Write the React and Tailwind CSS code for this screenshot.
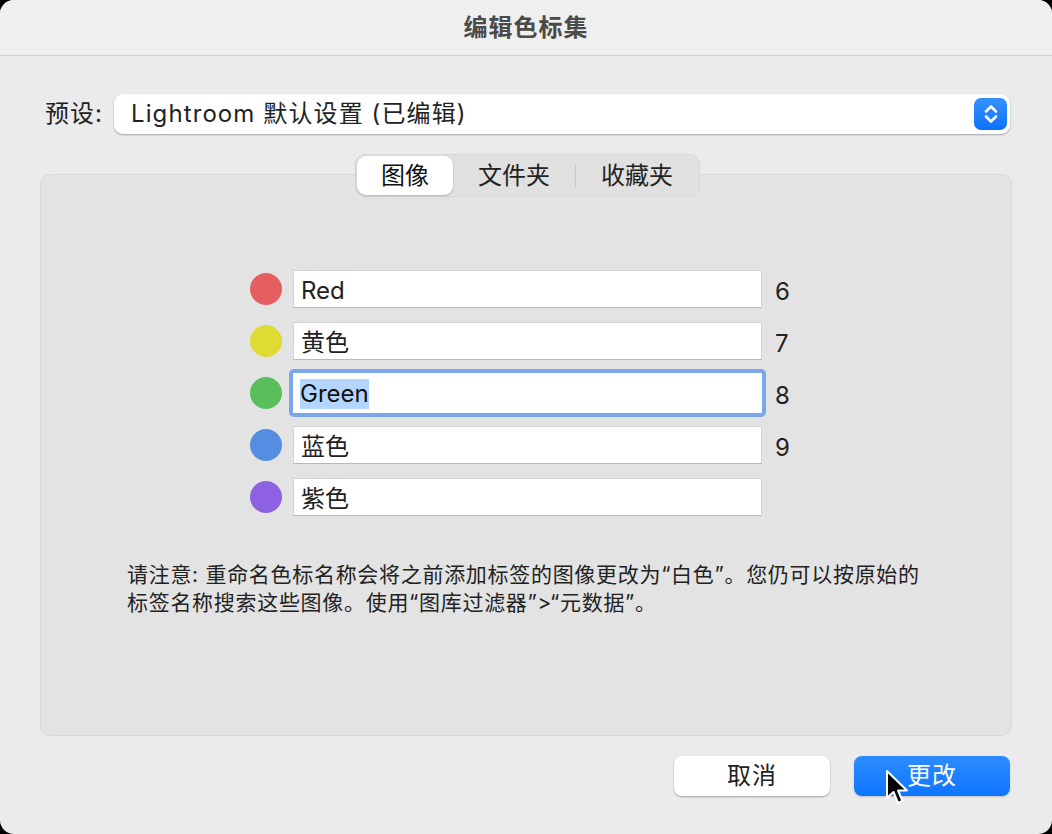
import React from 'react';

const font = { fontFamily: 'Inter, "Noto Sans CJK SC", sans-serif' };

const labels = [
    { color: 'bg-[#e65f5f]', name: 'Red', key: '6' },
    { color: 'bg-[#dfdb34]', name: '黄色', key: '7' },
    { color: 'bg-[#58bf5b]', name: 'Green', key: '8', focused: true },
    { color: 'bg-[#558de0]', name: '蓝色', key: '9' },
    { color: 'bg-[#8d62e2]', name: '紫色', key: '' },
];

const Stepper = () => (
    <div className="flex h-[32px] w-[33px] items-center justify-center rounded-[7px] bg-gradient-to-b from-[#3592ff] to-[#0a72ff]">
        <svg width="18" height="24" viewBox="0 0 18 24" fill="none">
            <path d="M4 9.5 L9 4.5 L14 9.5" stroke="white" strokeWidth="2.6" strokeLinecap="round" strokeLinejoin="round" />
            <path d="M4 14.5 L9 19.5 L14 14.5" stroke="white" strokeWidth="2.6" strokeLinecap="round" strokeLinejoin="round" />
        </svg>
    </div>
);

const Cursor = () => (
    <svg className="absolute left-[885px] top-[769px]" width="26" height="38" viewBox="0 0 26 38">
        <path d="M2 2 L2 29 L8.5 23 L13 34 L17.5 32 L13 21.5 L22 21.5 Z" fill="black" stroke="white" strokeWidth="2" strokeLinejoin="round" />
    </svg>
);

const LabelRow = ({ color, name, keyNum, focused }) => (
    <div className="flex h-[38px] items-center">
        <div className={`h-[32px] w-[32px] rounded-full ${color}`} />
        <div className="ml-[11px] w-[469px]">
            {focused ? (
                <div className="-mx-[4px] rounded-[5px] bg-[#7aa7ea] p-[4px]">
                    <div className="flex h-[40px] items-center bg-white px-[7px] pt-[2px] text-[24px] text-[#111]">
                        <span className="bg-[#b4d6fe] leading-[30px]">{name}</span>
                    </div>
                </div>
            ) : (
                <div className="flex h-[38px] items-center border border-[#d4d4d4] border-b-[#b8b8b8] bg-white px-[7px] pt-[3px] text-[24px] text-[#222]">
                    {name}
                </div>
            )}
        </div>
        <span className="ml-[13px] mt-[5px] text-[24px] text-[#222]">{keyNum}</span>
    </div>
);

export default function App() {
    return (
        <div className="h-[834px] w-[1052px] bg-black" style={font}>
            <div className="relative flex h-full w-full flex-col overflow-hidden rounded-[14px] bg-[#ebebeb]">
                <div className="flex h-[56px] shrink-0 items-center justify-center border-b border-[#cfcfcf] bg-[#efefef]">
                    <span className="text-[24px] font-bold tracking-[1px] text-[#4a4a4a]">编辑色标集</span>
                </div>

                <div className="mt-[38px] flex items-center pl-[45px] pr-[42px]">
                    <span className="w-[69px] text-[24px] tracking-[1px] text-[#222]">预设:</span>
                    <div className="flex h-[40px] flex-1 items-center justify-between rounded-[9px] bg-white pl-[17px] pr-[3px] shadow-[0_1px_2px_rgba(0,0,0,0.3)]">
                        <span className="text-[24px] tracking-[1.1px] text-[#222]">Lightroom 默认设置 (已编辑)</span>
                        <Stepper />
                    </div>
                </div>

                <div className="relative z-10 mt-[20px] -mb-[23px] flex justify-center pl-[3px]">
                    <div className="flex h-[43px] items-center rounded-[10px] bg-[#e0e0e0] p-[2px] shadow-[inset_0_0_0_1px_rgba(0,0,0,0.04)]">
                        <div className="flex h-[39px] w-[96px] items-center justify-center rounded-[9px] bg-white text-[24px] text-[#111] shadow-[0_1px_2px_rgba(0,0,0,0.2)]">
                            图像
                        </div>
                        <div className="flex w-[122px] items-center justify-center text-[24px] text-[#222]">文件夹</div>
                        <div className="h-[22px] w-px bg-[#c8c8c8]" />
                        <div className="flex w-[122px] items-center justify-center text-[24px] text-[#222]">收藏夹</div>
                    </div>
                </div>

                <div className="mx-[40px] h-[562px] rounded-[10px] border border-[#d9d9d9] bg-[#e3e3e3]">
                    <div className="ml-[209px] mt-[95px] flex flex-col gap-[14px]">
                        {labels.map((l) => (
                            <LabelRow key={l.name} color={l.color} name={l.name} keyNum={l.key} focused={l.focused} />
                        ))}
                    </div>
                    <div className="ml-[86px] mt-[45px] text-[21px] leading-[28px] tracking-[0.7px] text-[#222]">
                        <div>请注意: 重命名色标名称会将之前添加标签的图像更改为“白色”。您仍可以按原始的</div>
                        <div>标签名称搜索这些图像。使用“图库过滤器”&gt;“元数据”。</div>
                    </div>
                </div>

                <div className="mt-[20px] flex justify-end gap-[24px] pr-[42px]">
                    <button className="flex h-[40px] w-[156px] items-center justify-center rounded-[8px] bg-white text-[24px] tracking-[1px] text-[#222] shadow-[0_1px_2px_rgba(0,0,0,0.3)]">
                        取消
                    </button>
                    <button className="flex h-[40px] w-[156px] items-center justify-center rounded-[8px] bg-gradient-to-b from-[#2d8cff] to-[#0b74ff] text-[24px] tracking-[1px] text-white shadow-[0_1px_2px_rgba(0,0,0,0.2)]">
                        更改
                    </button>
                </div>

                <Cursor />
            </div>
        </div>
    );
}
